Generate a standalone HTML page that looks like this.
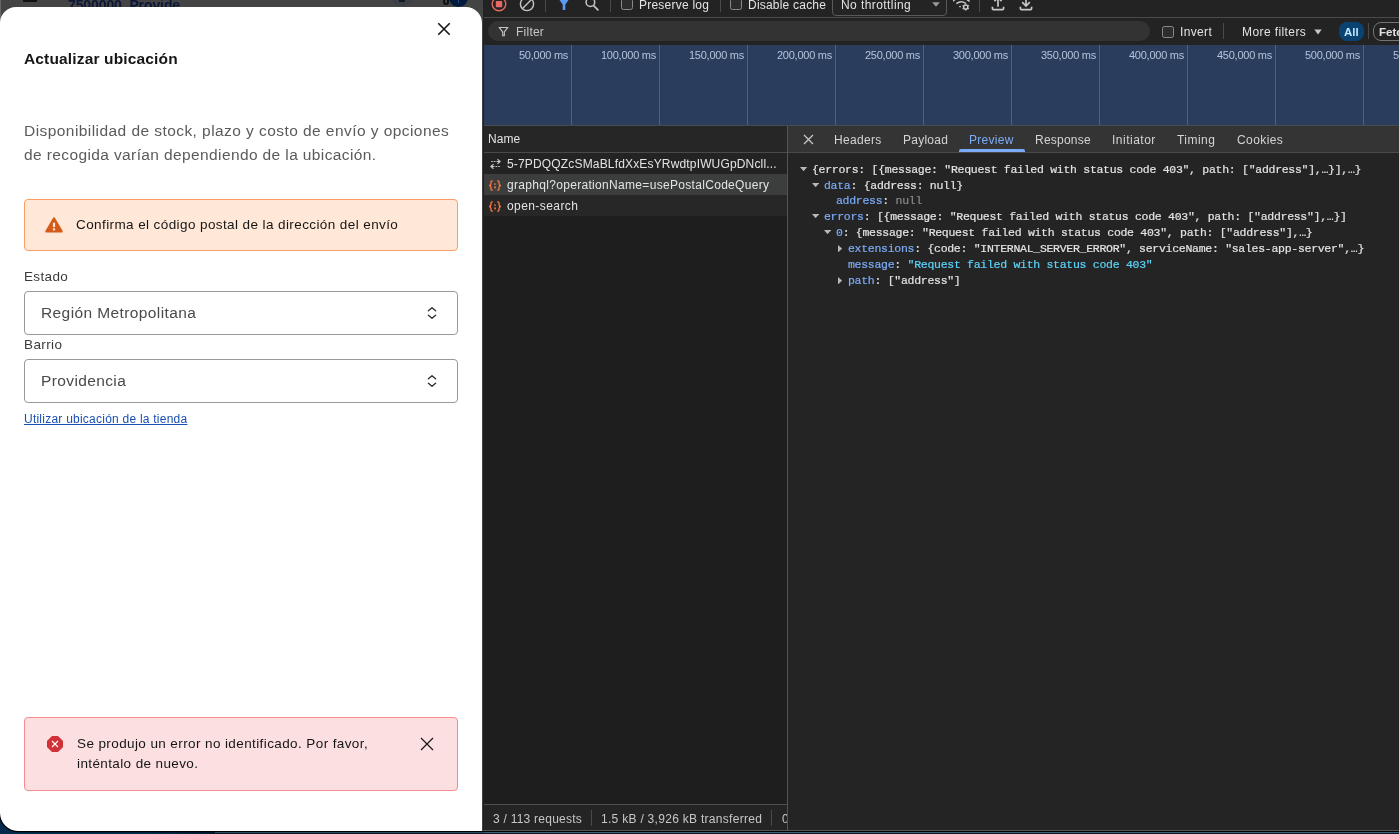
<!DOCTYPE html>
<html lang="es">
<head>
<meta charset="utf-8">
<title>Actualizar ubicación</title>
<style>
*{box-sizing:border-box;margin:0;padding:0}
html,body{width:1399px;height:834px;overflow:hidden;background:linear-gradient(#000 0,#000 831.6px,#3e5f7a 831.6px,#3e5f7a 832.6px,#0b1622 832.6px);font-family:"Liberation Sans",sans-serif;}
.abs{position:absolute}
.t{position:absolute;white-space:nowrap;line-height:1;will-change:transform}
/* ---------- left page ---------- */
#page{position:absolute;left:0;top:0;width:483px;height:831px;background:#444444;overflow:hidden;border-bottom-left-radius:18px;box-shadow:0 0 0 1.2px #000}
#wall{position:absolute;left:0;top:800px;width:40px;height:34px;background:#032b4d}
#wall2{position:absolute;left:0;top:831.6px;width:215px;height:3px;background:linear-gradient(90deg,#032b4d 0,#032b4d 150px,#021a30 215px)}
#modal{position:absolute;left:0;top:7px;width:482px;height:824px;background:#fff;border-radius:16px 16px 0 18px}
#mi{position:absolute;left:0;top:1px;width:482px;height:822px}
/* ---------- devtools ---------- */
#dt{position:absolute;left:483px;top:0;width:916px;height:831px;background:#1e1e1e;overflow:hidden;color:#e3e3e3}
.mono{font-family:"Liberation Mono",monospace;font-size:11.5px;letter-spacing:-0.285px;color:#e3e3e3;-webkit-text-stroke:0.2px}
</style>
</head>
<body>
<!-- ================= LEFT: page + modal ================= -->
<div id="wall"></div><div id="wall2"></div>
<div id="page">
  <!-- peeking page header behind overlay -->
  <div class="abs" style="left:0;top:0;width:1px;height:24px;background:#686868"></div>
  <div class="abs" style="left:23px;top:0;width:14px;height:2px;background:#111"></div>
  <div class="t" id="hdr" style="left:68px;top:-2px;font-size:14px;font-weight:bold;color:#0b1738;letter-spacing:-0.1px">7500000, Provide</div>
  <div class="abs" style="left:390px;top:-18px;width:24px;height:24px;border-radius:12px;background:#3a4046"></div>
  <div class="abs" style="left:399px;top:0;width:6px;height:2px;background:#15191e"></div>
  <div class="abs" style="left:443px;top:-4px;width:6px;height:9px;border:2px solid #111;border-radius:3px"></div>
  <div class="abs" style="left:449px;top:-12px;width:19px;height:19px;border-radius:10px;background:#001a3d"></div>
  <div class="abs" style="left:458px;top:0;width:1px;height:3px;background:#28477a"></div>

  <div id="modal"><div id="mi">
    <!-- close X -->
    <svg class="abs" style="left:436px;top:13px" width="16" height="16" viewBox="0 0 16 16"><path d="M2.3 2.3 L13.7 13.7 M13.7 2.3 L2.3 13.7" stroke="#161616" stroke-width="1.6" fill="none"/></svg>
    <div class="t" id="title" style="left:24px;top:43px;font-size:15.5px;font-weight:bold;color:#161616;letter-spacing:0.152px">Actualizar ubicación</div>
    <div class="t" id="p1" style="left:24px;top:115px;font-size:15.5px;color:#5b5b5b;letter-spacing:0.438px">Disponibilidad de stock, plazo y costo de envío y opciones</div>
    <div class="t" id="p2" style="left:24px;top:139px;font-size:15.5px;color:#5b5b5b;letter-spacing:0.386px">de recogida varían dependiendo de la ubicación.</div>

    <!-- warning box -->
    <div class="abs" style="left:24px;top:191px;width:434px;height:52px;background:#ffe8d7;border:1px solid #fb9e66;border-radius:4px"></div>
    <svg class="abs" style="left:44px;top:207px" width="20" height="19" viewBox="0 0 20 19"><path d="M10 3.5 L17.5 16.4 H2.5 Z" fill="#d55b1b" stroke="#d55b1b" stroke-width="2.4" stroke-linejoin="round"/><rect x="8.9" y="7.7" width="2.2" height="4.4" fill="#ffe8d7"/><rect x="8.9" y="13.3" width="2.2" height="2.1" fill="#ffe8d7"/></svg>
    <div class="t" id="warn" style="left:76px;top:210px;font-size:13.5px;color:#161616;letter-spacing:0.404px">Confirma el código postal de la dirección del envío</div>

    <!-- Estado -->
    <div class="t" id="l1" style="left:24px;top:262px;font-size:13.5px;color:#3b3b3b;letter-spacing:0.356px">Estado</div>
    <div class="abs" style="left:24px;top:283px;width:434px;height:44px;background:#fff;border:1px solid #999;border-radius:4px"></div>
    <div class="t" id="v1" style="left:41px;top:297px;font-size:15.5px;color:#4a4a4a;letter-spacing:0.397px">Región Metropolitana</div>
    <svg class="abs" style="left:426px;top:298px" width="12" height="14" viewBox="0 0 12 14"><path d="M2.4 4.8 L6 1.7 L9.6 4.8 M2.4 9.2 L6 12.3 L9.6 9.2" stroke="#333" stroke-width="1.4" fill="none" stroke-linecap="round" stroke-linejoin="round"/></svg>

    <!-- Barrio -->
    <div class="t" id="l2" style="left:24px;top:330px;font-size:13.5px;color:#3b3b3b;letter-spacing:0.396px">Barrio</div>
    <div class="abs" style="left:24px;top:351px;width:434px;height:44px;background:#fff;border:1px solid #999;border-radius:4px"></div>
    <div class="t" id="v2" style="left:41px;top:365px;font-size:15.5px;color:#4a4a4a;letter-spacing:0.381px">Providencia</div>
    <svg class="abs" style="left:426px;top:366px" width="12" height="14" viewBox="0 0 12 14"><path d="M2.4 4.8 L6 1.7 L9.6 4.8 M2.4 9.2 L6 12.3 L9.6 9.2" stroke="#333" stroke-width="1.4" fill="none" stroke-linecap="round" stroke-linejoin="round"/></svg>

    <div class="t" id="link" style="left:24px;top:405px;font-size:12px;color:#1a4fb4;text-decoration:underline;letter-spacing:0.236px">Utilizar ubicación de la tienda</div>

    <!-- error toast -->
    <div class="abs" style="left:24px;top:709px;width:434px;height:74px;background:#fbdfe1;border:1px solid #f78b8f;border-radius:4px"></div>
    <svg class="abs" style="left:46px;top:727px" width="18" height="18" viewBox="0 0 18 18"><path d="M6.2 1.6 H11.8 L16.4 6.2 V11.8 L11.8 16.4 H6.2 L1.6 11.8 V6.2 Z" fill="#d03238" stroke="#d03238" stroke-width="1.2" stroke-linejoin="round"/><path d="M6 6 L12 12 M12 6 L6 12" stroke="#fff" stroke-width="1.15" fill="none"/></svg>
    <div class="t" id="e1" style="left:77px;top:729px;font-size:13.5px;color:#161616;letter-spacing:0.397px">Se produjo un error no identificado. Por favor,</div>
    <div class="t" id="e2" style="left:77px;top:749px;font-size:13.5px;color:#161616;letter-spacing:0.384px">inténtalo de nuevo.</div>
    <svg class="abs" style="left:420px;top:729px" width="14" height="14" viewBox="0 0 14 14"><path d="M1 1 L13 13 M13 1 L1 13" stroke="#161616" stroke-width="1.2" fill="none"/></svg>
  </div></div>
</div>

<!-- ================= RIGHT: devtools ================= -->
<div id="dt">
  <!-- left edge border -->
  

  <!-- ===== top toolbar (cut off) ===== -->
  <div class="abs" id="tb" style="left:0;top:0;width:916px;height:45px;background:#232323"></div>
  <!-- record -->
  <svg class="abs" style="left:7.9px;top:-4.2px" width="16" height="16" viewBox="0 0 16 16"><circle cx="8" cy="8" r="6.8" fill="none" stroke="#e46962" stroke-width="1.4"/><rect x="4.8" y="4.9" width="6.4" height="6.4" rx="0.8" fill="#e46962"/></svg>
  <!-- clear -->
  <svg class="abs" style="left:36px;top:-4.2px" width="16" height="16" viewBox="0 0 16 16"><circle cx="8" cy="8" r="6.6" fill="none" stroke="#c7c7c7" stroke-width="1.4"/><path d="M3.6 12.4 L12.4 3.6" stroke="#c7c7c7" stroke-width="1.4"/></svg>
  <div class="abs" style="left:62px;top:-2px;width:1px;height:13.5px;background:#4a4a4a"></div>
  <!-- funnel blue -->
  <svg class="abs" style="left:74px;top:-3.7px" width="14" height="16" viewBox="0 0 14 16"><path d="M1 2 H13 L8.3 8.4 V14 H5.7 V8.4 Z" fill="#5b9cf5"/></svg>
  <!-- search -->
  <svg class="abs" style="left:100.5px;top:-3.7px" width="16" height="16" viewBox="0 0 16 16"><circle cx="6.4" cy="6.2" r="4.3" fill="none" stroke="#c7c7c7" stroke-width="1.5"/><path d="M9.6 9.6 L14.4 14.4" stroke="#c7c7c7" stroke-width="1.6"/></svg>
  <div class="abs" style="left:127px;top:-2px;width:1px;height:13.5px;background:#4a4a4a"></div>
  <div class="abs" style="left:138px;top:-2px;width:12px;height:12px;border:1px solid #8a8a8a;border-radius:2.5px;background:#2c2c2c"></div>
  <div class="t" id="pl" style="left:156px;top:-1px;font-size:12px;color:#e3e3e3;letter-spacing:0.228px">Preserve log</div>
  <div class="abs" style="left:237px;top:-2px;width:1px;height:13.5px;background:#4a4a4a"></div>
  <div class="abs" style="left:247px;top:-2px;width:12px;height:12px;border:1px solid #8a8a8a;border-radius:2.5px;background:#2c2c2c"></div>
  <div class="t" id="dc" style="left:265px;top:-1px;font-size:12px;color:#e3e3e3;letter-spacing:0.21px">Disable cache</div>
  <div class="abs" style="left:349px;top:-8px;width:115px;height:23.5px;border:1px solid #5a5a5a;border-radius:4px;background:#242424"></div>
  <div class="t" id="nt" style="left:358px;top:-1px;font-size:12px;color:#e3e3e3;letter-spacing:0.423px">No throttling</div>
  <svg class="abs" style="left:449px;top:2px" width="8" height="5" viewBox="0 0 8 5"><path d="M0.2 0.2 H7.8 L4 4.8 Z" fill="#9a9a9a"/></svg>
  <!-- wifi gear -->
  <svg class="abs" style="left:470px;top:0px" width="18" height="12" viewBox="0 0 18 12"><path d="M-0.6 1.4 Q8 -6 16.6 1.4" stroke="#c7c7c7" stroke-width="1.6" fill="none"/><path d="M3.4 3.7 Q8 0 12.7 3.3" stroke="#c7c7c7" stroke-width="1.6" fill="none"/><path d="M5.8 6.1 L8.2 6.1 L7 7.7 Z" fill="#c7c7c7"/><circle cx="12.7" cy="7.1" r="2.1" fill="none" stroke="#c7c7c7" stroke-width="1.5"/><path d="M14.87 8.35 L15.73 8.85 M12.70 9.60 L12.70 10.60 M10.53 8.35 L9.67 8.85 M10.53 5.85 L9.67 5.35 M12.70 4.60 L12.70 3.60 M14.87 5.85 L15.73 5.35" stroke="#c7c7c7" stroke-width="1.4" fill="none"/></svg>
  <div class="abs" style="left:496px;top:-2px;width:1px;height:13.5px;background:#4a4a4a"></div>
  <!-- upload -->
  <svg class="abs" style="left:507px;top:-3.7px" width="16" height="16" viewBox="0 0 16 16"><path d="M8 10.8 V2 M4.4 5.2 L8 1.6 L11.6 5.2" stroke="#c7c7c7" stroke-width="1.7" fill="none"/><path d="M2.4 10.8 V12.6 Q2.4 13.6 3.4 13.6 H12.6 Q13.6 13.6 13.6 12.6 V10.8" stroke="#c7c7c7" stroke-width="1.7" fill="none"/></svg>
  <!-- download -->
  <svg class="abs" style="left:535px;top:-3.7px" width="16" height="16" viewBox="0 0 16 16"><path d="M8 0 V9.8 M4.2 6.2 L8 10 L11.8 6.2" stroke="#c7c7c7" stroke-width="1.7" fill="none"/><path d="M2.4 10.8 V12.6 Q2.4 13.6 3.4 13.6 H12.6 Q13.6 13.6 13.6 12.6 V10.8" stroke="#c7c7c7" stroke-width="1.7" fill="none"/></svg>
  <div class="abs" style="left:1px;top:17px;width:915px;height:1px;background:#4a4a4a"></div>

  <!-- ===== filter row ===== -->
  <div class="abs" style="left:5px;top:21px;width:662px;height:20px;border-radius:10px;background:#333333"></div>
  <svg class="abs" style="left:15.3px;top:25.6px" width="11" height="11" viewBox="0 0 12 12"><path d="M1.2 1.6 H10.8 L6.9 6.4 V10.6 H5.1 V6.4 Z" fill="none" stroke="#c7c7c7" stroke-width="1.2" stroke-linejoin="round"/></svg>
  <div class="t" id="fl" style="left:33px;top:26px;font-size:12px;color:#c7c7c7;letter-spacing:0.24px">Filter</div>
  <div class="abs" style="left:679px;top:26px;width:12px;height:12px;border:1px solid #8a8a8a;border-radius:2.5px;background:#2c2c2c"></div>
  <div class="t" id="inv" style="left:697px;top:26px;font-size:12px;color:#e3e3e3;letter-spacing:0.36px">Invert</div>
  <div class="abs" style="left:740px;top:23px;width:1px;height:16px;background:#4a4a4a"></div>
  <div class="t" id="mf" style="left:759px;top:26px;font-size:12px;color:#e3e3e3;letter-spacing:0.404px">More filters</div>
  <svg class="abs" style="left:831px;top:29px" width="8" height="6" viewBox="0 0 8 6"><path d="M0.3 0.5 H7.7 L4 5.6 Z" fill="#c7c7c7"/></svg>
  <div class="abs" style="left:856px;top:22px;width:25px;height:19px;border-radius:8px;background:#0a4372"></div>
  <div class="t" id="all" style="left:861px;top:27px;font-size:11.5px;font-weight:bold;color:#c2e7ff">All</div>
  <div class="abs" style="left:885px;top:23px;width:1px;height:16px;background:#4a4a4a"></div>
  <div class="abs" style="left:890px;top:22px;width:60px;height:19px;border:1px solid #757575;border-radius:8px"></div>
  <div class="t" id="fet" style="left:896px;top:27px;font-size:11.5px;font-weight:bold;color:#e3e3e3">Fetch/XHR</div>

  <!-- ===== timeline overview ===== -->
  <div class="abs" id="tl" style="left:1px;top:45px;width:915px;height:80px;background:#2a3d5c"></div>
  <div class="abs" style="left:88px;top:45px;width:1px;height:80px;background:#4b6285"></div>
  <div class="t tlab" style="right:831px;top:49.5px;font-size:11px;color:#b4c4dd;letter-spacing:-0.25px">50,000 ms</div>
  <div class="abs" style="left:176px;top:45px;width:1px;height:80px;background:#4b6285"></div>
  <div class="t tlab" style="right:743px;top:49.5px;font-size:11px;color:#b4c4dd;letter-spacing:-0.25px">100,000 ms</div>
  <div class="abs" style="left:264px;top:45px;width:1px;height:80px;background:#4b6285"></div>
  <div class="t tlab" style="right:655px;top:49.5px;font-size:11px;color:#b4c4dd;letter-spacing:-0.25px">150,000 ms</div>
  <div class="abs" style="left:352px;top:45px;width:1px;height:80px;background:#4b6285"></div>
  <div class="t tlab" style="right:567px;top:49.5px;font-size:11px;color:#b4c4dd;letter-spacing:-0.25px">200,000 ms</div>
  <div class="abs" style="left:440px;top:45px;width:1px;height:80px;background:#4b6285"></div>
  <div class="t tlab" style="right:479px;top:49.5px;font-size:11px;color:#b4c4dd;letter-spacing:-0.25px">250,000 ms</div>
  <div class="abs" style="left:528px;top:45px;width:1px;height:80px;background:#4b6285"></div>
  <div class="t tlab" style="right:391px;top:49.5px;font-size:11px;color:#b4c4dd;letter-spacing:-0.25px">300,000 ms</div>
  <div class="abs" style="left:616px;top:45px;width:1px;height:80px;background:#4b6285"></div>
  <div class="t tlab" style="right:303px;top:49.5px;font-size:11px;color:#b4c4dd;letter-spacing:-0.25px">350,000 ms</div>
  <div class="abs" style="left:704px;top:45px;width:1px;height:80px;background:#4b6285"></div>
  <div class="t tlab" style="right:215px;top:49.5px;font-size:11px;color:#b4c4dd;letter-spacing:-0.25px">400,000 ms</div>
  <div class="abs" style="left:792px;top:45px;width:1px;height:80px;background:#4b6285"></div>
  <div class="t tlab" style="right:127px;top:49.5px;font-size:11px;color:#b4c4dd;letter-spacing:-0.25px">450,000 ms</div>
  <div class="abs" style="left:880px;top:45px;width:1px;height:80px;background:#4b6285"></div>
  <div class="t tlab" style="right:39px;top:49.5px;font-size:11px;color:#b4c4dd;letter-spacing:-0.25px">500,000 ms</div>
  <div class="abs" style="left:968px;top:45px;width:1px;height:80px;background:#4b6285"></div>
  <div class="t tlab" style="right:-49px;top:49.5px;font-size:11px;color:#b4c4dd;letter-spacing:-0.25px">550,000 ms</div>
  
  <div class="abs" style="left:1px;top:125px;width:915px;height:1px;background:#4a4a4a"></div>

  <!-- ===== name column ===== -->
  <div class="abs" style="left:1px;top:126px;width:303px;height:26px;background:#262626"></div>
  <div class="t" id="nm" style="left:5px;top:133px;font-size:12px;color:#e3e3e3;letter-spacing:0.08px">Name</div>
  <div class="abs" style="left:1px;top:152px;width:915px;height:1px;background:#4a4a4a"></div>
  <div class="abs" style="left:1px;top:153px;width:303px;height:21px;background:#232323"></div>
  <div class="abs" style="left:1px;top:174px;width:303px;height:21px;background:#3c3e3e"></div>
  <div class="abs" style="left:1px;top:195px;width:303px;height:21px;background:#272727"></div>
  <!-- ws icon -->
  <svg class="abs" style="left:7px;top:159px" width="11" height="10" viewBox="0 0 11 10"><path d="M1.2 2.5 H6.6" stroke="#c7c7c7" stroke-width="1.2" stroke-dasharray="1.6 1" fill="none"/><path d="M6.6 2.5 H9.8 M7.5 0.3 L10.2 2.5 L7.5 4.7" stroke="#c7c7c7" stroke-width="1.2" fill="none"/><path d="M9.8 7.5 H4.4" stroke="#c7c7c7" stroke-width="1.2" stroke-dasharray="1.6 1" fill="none"/><path d="M4.4 7.5 H1.2 M3.5 5.3 L0.8 7.5 L3.5 9.7" stroke="#c7c7c7" stroke-width="1.2" fill="none"/></svg>
  <div class="t" id="r1" style="left:23.6px;top:158px;font-size:12px;color:#e3e3e3;letter-spacing:0.163px">5-7PDQQZcSMaBLfdXxEsYRwdtpIWUGpDNcll...</div>
  <svg class="abs" style="left:5.2px;top:179.6px" width="14" height="11" viewBox="0 0 14 11"><path d="M4.7 0.8 C3 0.8 2.9 1.7 2.9 2.7 V3.7 C2.9 4.8 2.2 5.4 1 5.5 C2.2 5.6 2.9 6.2 2.9 7.3 V8.3 C2.9 9.3 3 10.2 4.7 10.2" stroke="#e8743f" stroke-width="1.4" fill="none"/><path d="M9.3 0.8 C11 0.8 11.1 1.7 11.1 2.7 V3.7 C11.1 4.8 11.8 5.4 13 5.5 C11.8 5.6 11.1 6.2 11.1 7.3 V8.3 C11.1 9.3 11 10.2 9.3 10.2" stroke="#e8743f" stroke-width="1.4" fill="none"/><circle cx="7" cy="4.1" r="0.9" fill="#e8743f"/><path d="M7 6.4 a0.9 0.9 0 1 1 -0.1 1.8 L6.4 9.2 L7.4 9.2 Z" fill="#e8743f"/><circle cx="7" cy="7.2" r="0.9" fill="#e8743f"/></svg>
  <div class="t" id="r2" style="left:23.6px;top:179px;font-size:12px;color:#e3e3e3;letter-spacing:0.313px">graphql?operationName=usePostalCodeQuery</div>
  <svg class="abs" style="left:5.2px;top:200.6px" width="14" height="11" viewBox="0 0 14 11"><path d="M4.7 0.8 C3 0.8 2.9 1.7 2.9 2.7 V3.7 C2.9 4.8 2.2 5.4 1 5.5 C2.2 5.6 2.9 6.2 2.9 7.3 V8.3 C2.9 9.3 3 10.2 4.7 10.2" stroke="#e8743f" stroke-width="1.4" fill="none"/><path d="M9.3 0.8 C11 0.8 11.1 1.7 11.1 2.7 V3.7 C11.1 4.8 11.8 5.4 13 5.5 C11.8 5.6 11.1 6.2 11.1 7.3 V8.3 C11.1 9.3 11 10.2 9.3 10.2" stroke="#e8743f" stroke-width="1.4" fill="none"/><circle cx="7" cy="4.1" r="0.9" fill="#e8743f"/><path d="M7 6.4 a0.9 0.9 0 1 1 -0.1 1.8 L6.4 9.2 L7.4 9.2 Z" fill="#e8743f"/><circle cx="7" cy="7.2" r="0.9" fill="#e8743f"/></svg>
  <div class="t" id="r3" style="left:23.6px;top:200px;font-size:12px;color:#e3e3e3;letter-spacing:0.418px">open-search</div>

  <!-- status bar -->
  <div class="abs" style="left:1px;top:804px;width:303px;height:1px;background:#505050"></div>
  <div class="abs" style="left:1px;top:805px;width:303px;height:26px;background:#242424"></div>
  <div class="t" id="s1" style="left:10px;top:813px;font-size:12px;color:#c7c7c7;letter-spacing:0.247px">3 / 113 requests</div>
  <div class="abs" style="left:108px;top:810px;width:1px;height:16px;background:#4a4a4a"></div>
  <div class="t" id="s2" style="left:118px;top:813px;font-size:12px;color:#c7c7c7;letter-spacing:0.289px">1.5 kB / 3,926 kB transferred</div>
  <div class="abs" style="left:288px;top:810px;width:1px;height:16px;background:#4a4a4a"></div>
  <div class="t" id="s3" style="left:299px;top:813px;font-size:12px;color:#c7c7c7">0</div>

  <!-- ===== detail panel ===== -->
  <div class="abs" style="left:0;top:830px;width:916px;height:1px;background:#555;z-index:5"></div>
  <div class="abs" id="dp" style="left:304px;top:126px;width:612px;height:705px;background:#242424;border-left:1px solid #555"></div>
  <div class="abs" style="left:305px;top:126px;width:611px;height:26px;background:#343434"></div>
  <div class="abs" style="left:305px;top:152px;width:611px;height:1px;background:#4a4a4a"></div>
  <svg class="abs" style="left:320px;top:133.6px" width="11" height="11" viewBox="0 0 11 11"><path d="M1 1 L10 10 M10 1 L1 10" stroke="#c7c7c7" stroke-width="1.3" fill="none"/></svg>
  <div class="t" id="tab1" style="left:351px;top:134px;font-size:12px;color:#d4d4d4;letter-spacing:0.313px">Headers</div>
  <div class="t" id="tab2" style="left:420px;top:134px;font-size:12px;color:#d4d4d4;letter-spacing:0.25px">Payload</div>
  <div class="t" id="tab3" style="left:486px;top:134px;font-size:12px;color:#7cacf8;letter-spacing:0.294px">Preview</div>
  <div class="abs" style="left:476px;top:149px;width:66px;height:3px;background:#7cacf8;border-radius:2px 2px 0 0"></div>
  <div class="t" id="tab4" style="left:552px;top:134px;font-size:12px;color:#d4d4d4;letter-spacing:0.222px">Response</div>
  <div class="t" id="tab5" style="left:629px;top:134px;font-size:12px;color:#d4d4d4;letter-spacing:0.5px">Initiator</div>
  <div class="t" id="tab6" style="left:694px;top:134px;font-size:12px;color:#d4d4d4;letter-spacing:0.461px">Timing</div>
  <div class="t" id="tab7" style="left:754px;top:134px;font-size:12px;color:#d4d4d4;letter-spacing:0.406px">Cookies</div>

  <!-- JSON tree -->
  <div class="t mono" id="j0" style="left:329.4px;top:164.1px">{errors: [{message: "Request failed with status code 403", path: ["address"],…}],…}</div>
  <svg class="abs" style="left:317.4px;top:167.2px" width="7.2" height="4.2" viewBox="0 0 7.2 4.2"><path d="M0 0 H7.2 L3.6 4.2 Z" fill="#b8b8b8"/></svg>
  <div class="t mono" id="j1" style="left:341.3px;top:179.5px"><span style="color:#7cacf8">data</span>: {address: null}</div>
  <svg class="abs" style="left:329.3px;top:182.6px" width="7.2" height="4.2" viewBox="0 0 7.2 4.2"><path d="M0 0 H7.2 L3.6 4.2 Z" fill="#b8b8b8"/></svg>
  <div class="t mono" id="j2" style="left:353.3px;top:195.1px"><span style="color:#7cacf8">address</span>: <span style="color:#8a8a8a">null</span></div>
  <div class="t mono" id="j3" style="left:341.3px;top:211.1px"><span style="color:#7cacf8">errors</span>: [{message: "Request failed with status code 403", path: ["address"],…}]</div>
  <svg class="abs" style="left:329.3px;top:214.2px" width="7.2" height="4.2" viewBox="0 0 7.2 4.2"><path d="M0 0 H7.2 L3.6 4.2 Z" fill="#b8b8b8"/></svg>
  <div class="t mono" id="j4" style="left:353.3px;top:226.9px"><span style="color:#7cacf8">0</span>: {message: "Request failed with status code 403", path: ["address"],…}</div>
  <svg class="abs" style="left:341.3px;top:230.0px" width="7.2" height="4.2" viewBox="0 0 7.2 4.2"><path d="M0 0 H7.2 L3.6 4.2 Z" fill="#b8b8b8"/></svg>
  <div class="t mono" id="j5" style="left:365.2px;top:243.0px"><span style="color:#7cacf8">extensions</span>: {code: "INTERNAL_SERVER_ERROR", serviceName: "sales-app-server",…}</div>
  <svg class="abs" style="left:355.1px;top:244.9px" width="4.2" height="7.4" viewBox="0 0 4.2 7.4"><path d="M0 0 V7.4 L4.2 3.7 Z" fill="#b8b8b8"/></svg>
  <div class="t mono" id="j6" style="left:365.2px;top:258.9px"><span style="color:#7cacf8">message</span>: <span style="color:#5cd5fb">"Request failed with status code 403"</span></div>
  <div class="t mono" id="j7" style="left:365.2px;top:274.8px"><span style="color:#7cacf8">path</span>: ["address"]</div>
  <svg class="abs" style="left:355.1px;top:276.7px" width="4.2" height="7.4" viewBox="0 0 4.2 7.4"><path d="M0 0 V7.4 L4.2 3.7 Z" fill="#b8b8b8"/></svg>
</div>
</body>
</html>
